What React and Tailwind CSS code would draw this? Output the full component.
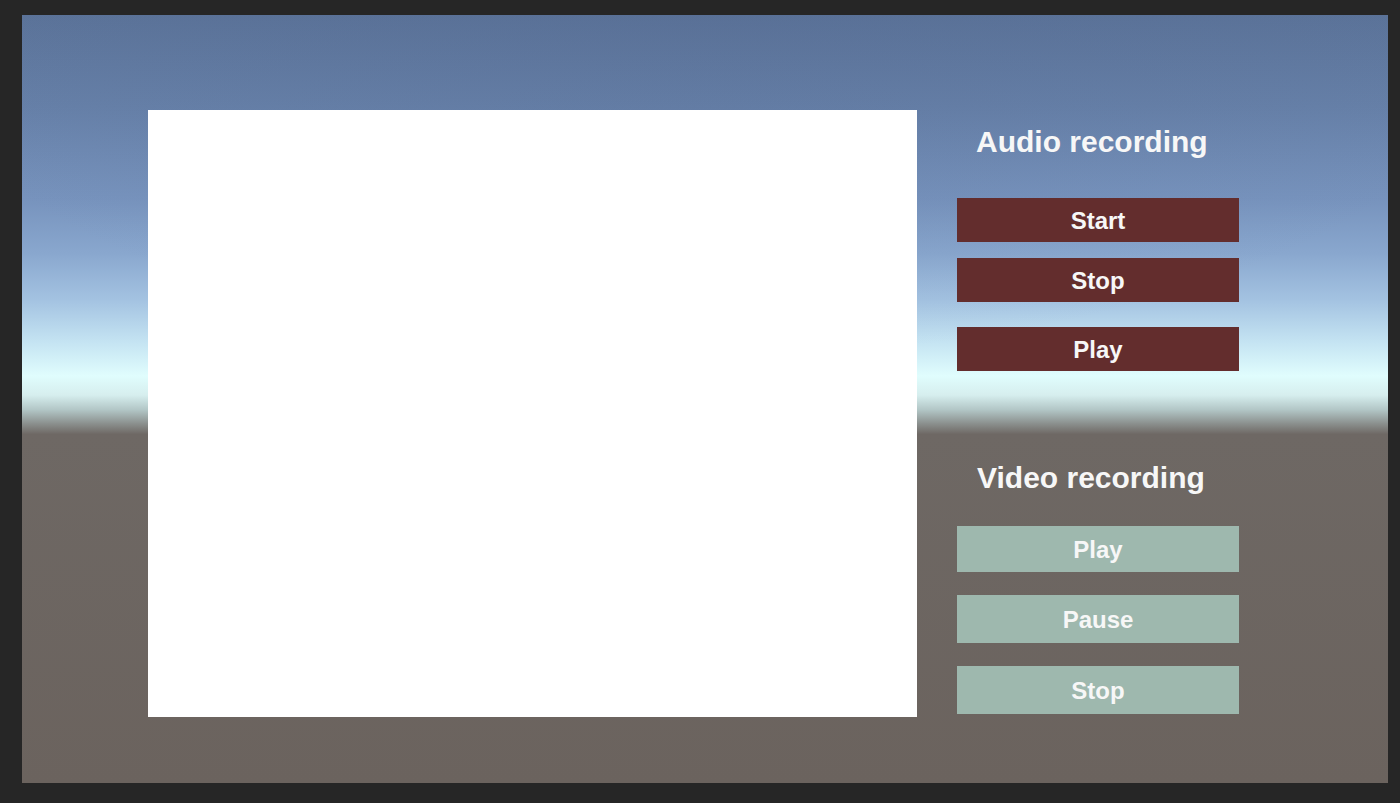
export default function App() {
  const font = { fontFamily: '"Liberation Sans", Arial, sans-serif' };
  const red = "flex h-[44px] w-[282px] items-center justify-center bg-[#632d2d] pt-[2px] text-[24px] font-bold leading-none text-[#f7f7f7]";
  const teal = "flex w-[282px] items-center justify-center bg-[#9eb8ae] pt-[2px] text-[24px] font-bold leading-none text-[#f7f7f7]";
  return (
    <div className="h-[803px] w-[1400px] bg-[#262626] pl-[22px] pt-[15px]" style={font}>
      <div className="relative flex h-[768px] w-[1366px] bg-[linear-gradient(to_bottom,#5b7399_0%,#6680a8_12%,#7793bd_24%,#89a7ce_31%,#a3c2e1_37%,#c4e3f2_42.5%,#e0fdfd_47%,#d6eeee_49.5%,#b2c6c6_51.4%,#8b908e_53.2%,#6e6864_54.6%,#6b635e_100%)]">
        <div className="pointer-events-none absolute inset-0 bg-[radial-gradient(ellipse_60%_45%_at_50%_0%,rgba(80,100,140,0.18),rgba(80,100,140,0)_100%)]" />
        <div className="relative ml-[126px] mt-[95px] h-[607px] w-[769px] bg-white" />
        <div className="relative ml-[40px] mt-[112px] flex flex-col">
          <div className="ml-[19px] h-[30px] text-[30px] font-bold leading-[30px] text-[#f7f7f7]">Audio recording</div>
          <div className={`${red} mt-[41px]`}>Start</div>
          <div className={`${red} mt-[16px]`}>Stop</div>
          <div className={`${red} mt-[25px]`}>Play</div>
          <div className="ml-[20px] mt-[92px] h-[30px] text-[30px] font-bold leading-[30px] text-[#f7f7f7]">Video recording</div>
          <div className={`${teal} mt-[33px] h-[46px]`}>Play</div>
          <div className={`${teal} mt-[23px] h-[48px]`}>Pause</div>
          <div className={`${teal} mt-[23px] h-[48px]`}>Stop</div>
        </div>
      </div>
    </div>
  );
}
